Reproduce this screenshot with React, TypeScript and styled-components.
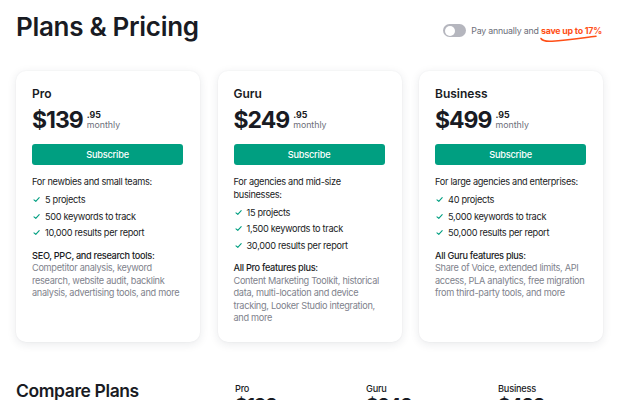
import React from "react";
import styled, { createGlobalStyle } from "styled-components";

const GlobalStyle = createGlobalStyle`
  body {
    margin: 0;
    background: #ffffff;
    font-family: Inter, "Noto Sans", sans-serif;
    color: #191b23;
  }
`;

const Page = styled.div`
  width: 618px;
  height: 400px;
  overflow: hidden;
  padding: 0 15px 0 16px;
  box-sizing: border-box;
`;

const Header = styled.div`
  display: flex;
  align-items: flex-start;
  justify-content: space-between;
  padding-top: 11px;
`;

const Title = styled.h1`
  margin: 0;
  font-size: 26px;
  font-weight: 600;
  letter-spacing: -0.3px;
  line-height: 32px;
`;

const Billing = styled.div`
  display: flex;
  align-items: center;
  gap: 5px;
  margin-top: 13px;
  font-size: 8.8px;
  letter-spacing: -0.2px;
  color: #6c6e79;
  margin-right: 1px;
`;

const Toggle = styled.span`
  width: 23px;
  height: 13px;
  border-radius: 7px;
  background: #b5b6be;
  position: relative;
  &::after {
    content: "";
    position: absolute;
    left: 1.5px;
    top: 1.5px;
    width: 10px;
    height: 10px;
    border-radius: 50%;
    background: #fff;
  }
`;

const Save = styled.span`
  position: relative;
  color: #ff4f17;
  font-weight: 700;
  svg {
    position: absolute;
    left: -1px;
    top: 10px;
  }
`;

const Cards = styled.div`
  display: grid;
  grid-template-columns: repeat(3, 1fr);
  gap: 17.5px;
  margin-top: 28px;
`;

const Card = styled.div`
  background: #fff;
  border-radius: 10px;
  box-shadow: 0 2px 10px rgba(30, 36, 60, 0.1), 0 0 2px rgba(30, 36, 60, 0.05);
  padding: 15px 17px 0 16px;
  height: 271px;
  box-sizing: border-box;
`;

const PlanName = styled.div`
  font-size: 12px;
  font-weight: 600;
  line-height: 16px;
`;

const PriceRow = styled.div`
  display: flex;
  align-items: flex-start;
  gap: 4px;
  margin-top: 4px;
`;

const Price = styled.div`
  font-size: 23px;
  font-weight: 700;
  line-height: 28px;
  letter-spacing: -1px;
`;

const PriceMeta = styled.div`
  display: flex;
  flex-direction: column;
  font-size: 8.8px;
  line-height: 9.5px;
  padding-top: 4px;
  color: #6c6e79;
  b {
    color: #191b23;
    font-weight: 700;
  }
`;

const SubscribeButton = styled.button`
  display: block;
  width: 100%;
  height: 21px;
  margin-top: 10px;
  border: none;
  border-radius: 3px;
  background: #009f81;
  color: #fff;
  font-family: inherit;
  font-size: 9.2px;
  letter-spacing: -0.2px;
  font-weight: 500;
`;

const Audience = styled.div`
  margin-top: 11px;
  font-size: 9.2px;
  letter-spacing: -0.3px;
  line-height: 12.5px;
  color: #191b23;
`;

const List = styled.ul`
  list-style: none;
  margin: 3px 0 0;
  padding: 0;
`;

const Item = styled.li`
  display: flex;
  align-items: center;
  gap: 4px;
  height: 16.5px;
  font-size: 9.2px;
  letter-spacing: -0.3px;
  color: #191b23;
`;

const ExtraTitle = styled.div`
  margin-top: 8.5px;
  font-size: 9.2px;
  letter-spacing: -0.3px;
  font-weight: 500;
  line-height: 12.6px;
`;

const ExtraText = styled.div`
  font-size: 9.2px;
  letter-spacing: -0.3px;
  line-height: 12.6px;
  color: #80828c;
`;

const Compare = styled.div`
  display: grid;
  grid-template-columns: 219px 131px 132px 1fr;
  margin-top: 38px;
`;

const CompareTitle = styled.div`
  font-size: 17.5px;
  font-weight: 600;
  letter-spacing: -0.4px;
  line-height: 22px;
`;

const ComparePlan = styled.div`
  padding-top: 3px;
  font-size: 9.2px;
  font-weight: 500;
  letter-spacing: -0.2px;
  line-height: 12px;
  span {
    display: block;
    margin-top: 1px;
    font-size: 19px;
    font-weight: 700;
    line-height: 20px;
    letter-spacing: -0.8px;
  }
`;

const Check = () => (
  <svg width="9" height="7" viewBox="0 0 9 7" fill="none">
    <path d="M2 3.8 L3.8 5.4 L7.2 1.6" stroke="#009f81" strokeWidth="1.1" strokeLinecap="round" strokeLinejoin="round" />
  </svg>
);

const plans = [
  {
    name: "Pro",
    price: "$139",
    audience: "For newbies and small teams:",
    items: ["5 projects", "500 keywords to track", "10,000 results per report"],
    extraTitle: "SEO, PPC, and research tools:",
    extra: "Competitor analysis, keyword research, website audit, backlink analysis, advertising tools, and more",
  },
  {
    name: "Guru",
    price: "$249",
    audience: "For agencies and mid-size businesses:",
    items: ["15 projects", "1,500 keywords to track", "30,000 results per report"],
    extraTitle: "All Pro features plus:",
    extra: "Content Marketing Toolkit, historical data, multi-location and device tracking, Looker Studio integration, and more",
  },
  {
    name: "Business",
    price: "$499",
    audience: "For large agencies and enterprises:",
    items: ["40 projects", "5,000 keywords to track", "50,000 results per report"],
    extraTitle: "All Guru features plus:",
    extra: "Share of Voice, extended limits, API access, PLA analytics, free migration from third-party tools, and more",
  },
];

const App = () => {
  return (
    <Page>
      <GlobalStyle />
      <Header>
        <Title>Plans &amp; Pricing</Title>
        <Billing>
          <Toggle />
          <span>
            Pay annually and{" "}
            <Save>
              save up to 17%
              <svg width="58" height="8" viewBox="0 0 58 8" fill="none">
                <path d="M1 3.5 Q 3 6.8, 12 6.2 C 28 5.2, 44 2.6, 56 1.2" stroke="#ff4f17" strokeWidth="1.5" strokeLinecap="round" />
              </svg>
            </Save>
          </span>
        </Billing>
      </Header>
      <Cards>
        {plans.map((p) => (
          <Card key={p.name}>
            <PlanName>{p.name}</PlanName>
            <PriceRow>
              <Price>{p.price}</Price>
              <PriceMeta>
                <b>.95</b>
                monthly
              </PriceMeta>
            </PriceRow>
            <SubscribeButton>Subscribe</SubscribeButton>
            <Audience>{p.audience}</Audience>
            <List>
              {p.items.map((i) => (
                <Item key={i}>
                  <Check />
                  {i}
                </Item>
              ))}
            </List>
            <ExtraTitle>{p.extraTitle}</ExtraTitle>
            <ExtraText>{p.extra}</ExtraText>
          </Card>
        ))}
      </Cards>
      <Compare>
        <CompareTitle>Compare Plans</CompareTitle>
        <ComparePlan>Pro<span>$139</span></ComparePlan>
        <ComparePlan>Guru<span>$249</span></ComparePlan>
        <ComparePlan>Business<span>$499</span></ComparePlan>
      </Compare>
    </Page>
  );
};

export default App;
